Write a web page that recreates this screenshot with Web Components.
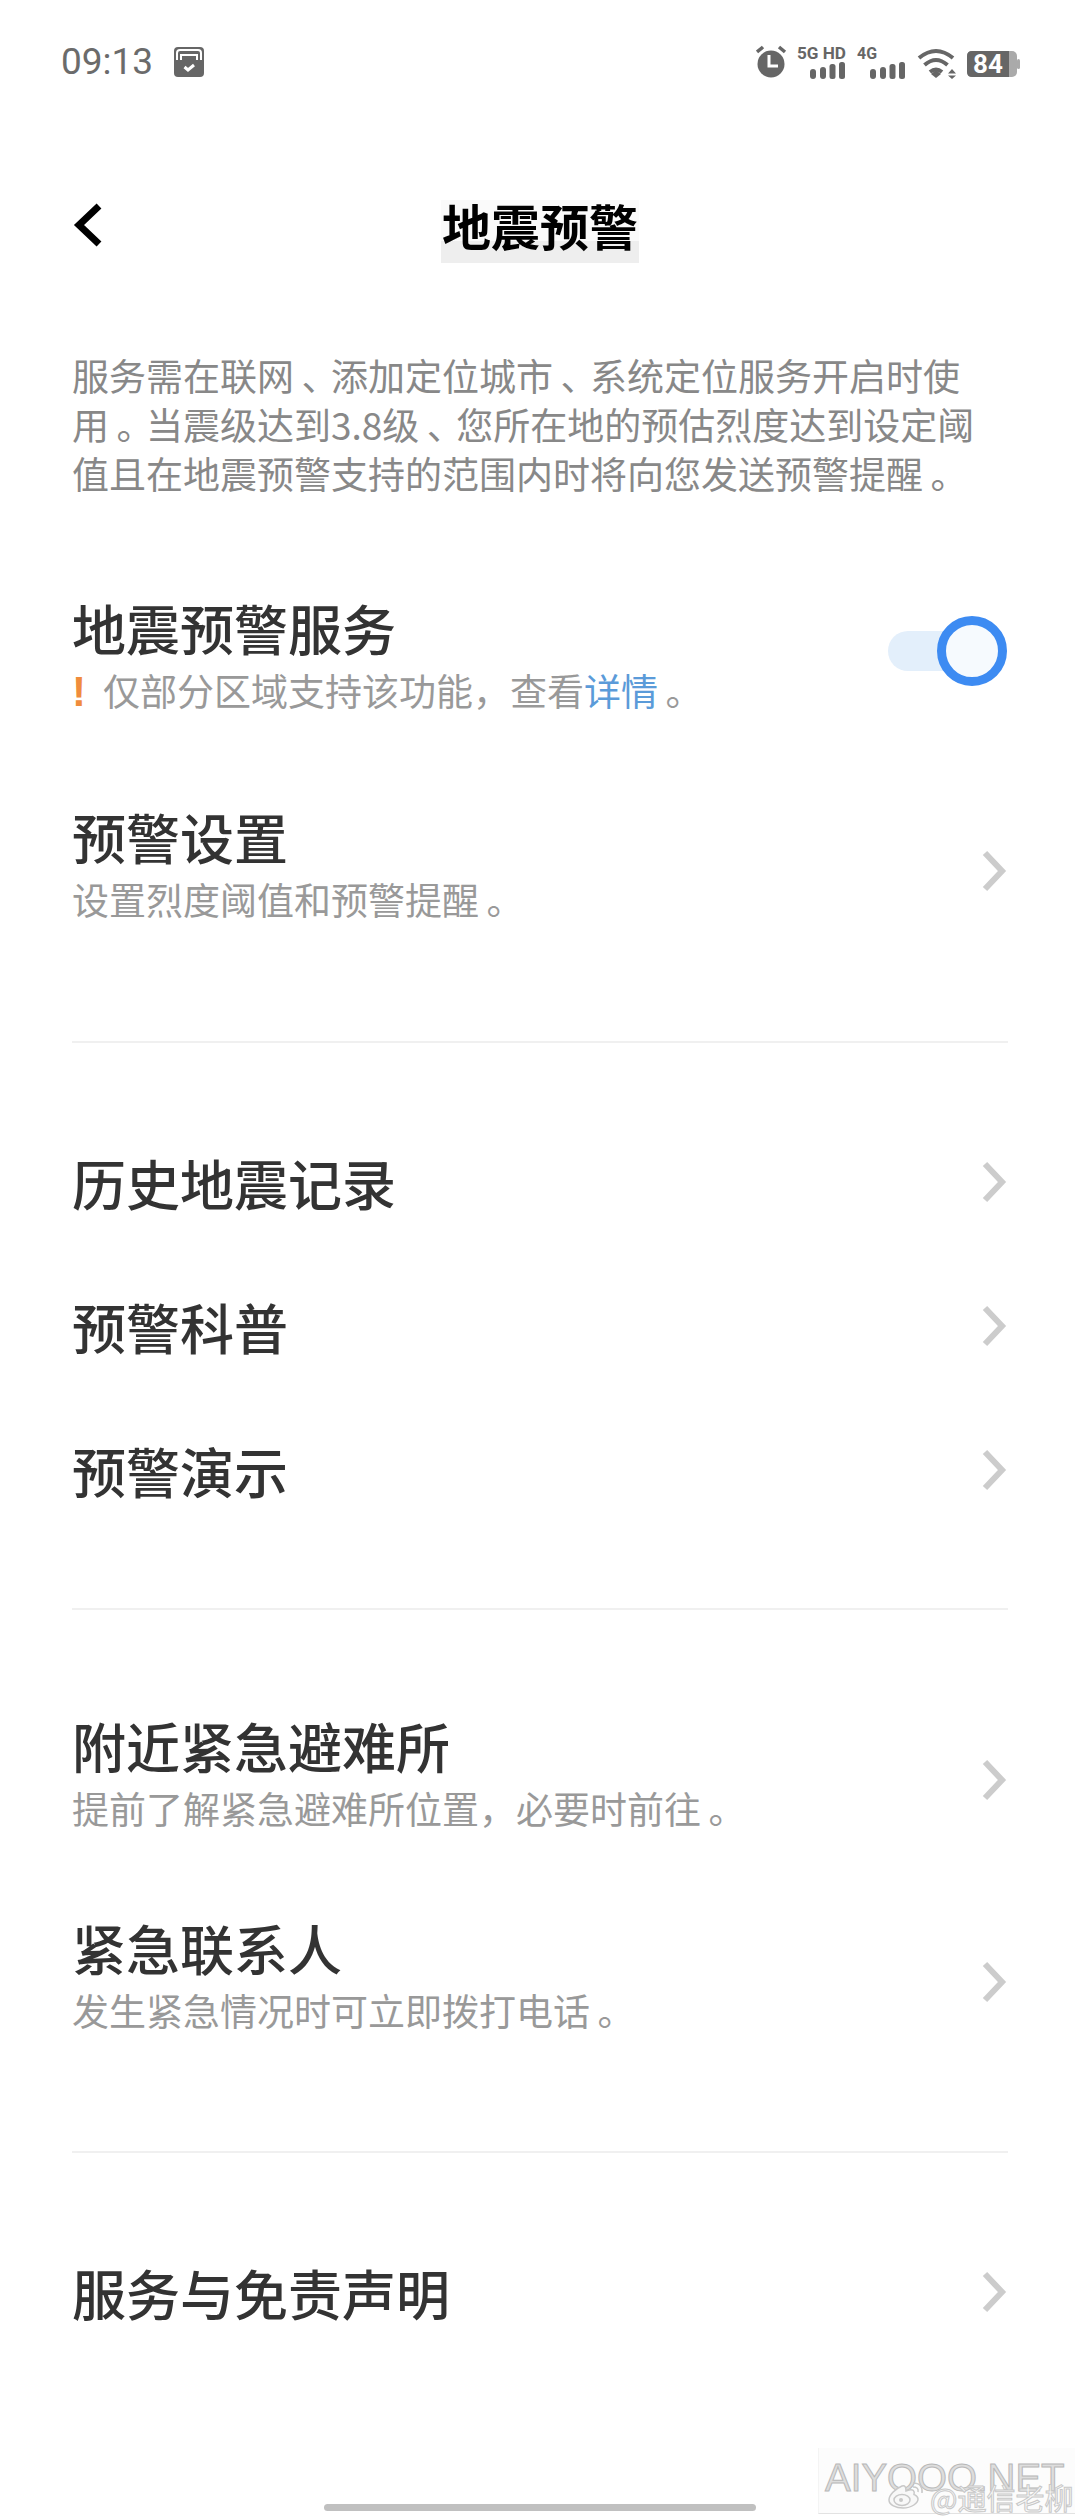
<!DOCTYPE html>
<html lang="zh">
<head>
<meta charset="utf-8">
<style>
    html, body { margin: 0; background: #fff; }
    body {
        width: 1080px;
        height: 2520px;
        overflow: hidden;
        position: relative;
        font-family: "Noto Sans CJK SC", "Noto Sans", sans-serif;
    }
    /* the reference font sets these two marks nearer the middle of their box */
    .p { margin-left: .2em; letter-spacing: -.2em; }
    .warn { display: inline-block; width: 31px; font: 700 42px/0 "Liberation Sans", sans-serif; color: #f08c3c; }
    .link { color: #5b9bd9; }
</style>
</head>
<body>

<template id="status-bar-template">
    <style>
        :host { display: flex; align-items: center; height: 60px; padding: 32px 59px 28px 61px; }
        .time { font: 400 37px/60px Roboto, sans-serif; color: #6b6b6b; }
        .app { margin-left: 21px; }
        .icons { margin-left: auto; }
        svg { display: block; }
    </style>
    <span class="time">09:13</span>
    <svg class="app" width="30" height="30" viewBox="0 0 30 30">
        <rect width="30" height="30" rx="4" fill="#666"/>
        <path d="M3 13V6Q3 3 6 3H24Q27 3 27 6V13" fill="none" stroke="#fff" stroke-width="2"/>
        <path d="M7 13V8H23V13" fill="none" stroke="#fff" stroke-width="2"/>
        <path d="M10.500 20L14 23L20 18" fill="none" stroke="#fff" stroke-width="3"/>
    </svg>
    <svg class="icons" width="265" height="44" viewBox="0 0 265 44">
        <circle cx="15" cy="24" r="13.500" fill="#666"/>
        <path d="M1 12L7 7M29 12L23 7" stroke="#666" stroke-width="3.500"/>
        <path d="M13 15V26H22" fill="none" stroke="#fff" stroke-width="3"/>
        <text x="41" y="19" font-family="Roboto, sans-serif" font-weight="700" font-size="17" fill="#666" textLength="49" lengthAdjust="spacingAndGlyphs">5G HD</text>
        <text x="101" y="19" font-family="Roboto, sans-serif" font-weight="700" font-size="17" fill="#666" textLength="20" lengthAdjust="spacingAndGlyphs">4G</text>
        <g fill="#666">
            <rect x="54" y="29" width="6" height="10" rx="3"/><rect x="64" y="27" width="6" height="12" rx="3"/><rect x="73.500" y="24" width="6" height="15" rx="2.500"/><rect x="83" y="22" width="6" height="17" rx="2.500"/>
            <rect x="114" y="29" width="6" height="10" rx="3"/><rect x="124" y="27" width="6" height="12" rx="3"/><rect x="133.500" y="24" width="6" height="15" rx="2.500"/><rect x="143" y="22" width="6" height="17" rx="2.500"/>
        </g>
        <path d="M163 18Q180 4 197 18M168.500 25Q180 15 191.500 25M174 32Q180 27 186 32" fill="none" stroke="#666" stroke-width="4"/>
        <path d="M175 34L180 30L185 34L180 38Z" fill="#666"/>
        <path d="M192 33.500L196 29L200 33.500ZM192 35.500H200L196 39Z" fill="#666"/>
        <rect x="211" y="11" width="50" height="26" rx="5" fill="#aaa"/>
        <path d="M216 11H253V37H216Q211 37 211 32V16Q211 11 216 11Z" fill="#666"/>
        <rect x="261" y="19" width="3" height="10" rx="1.500" fill="#aaa"/>
        <text x="232" y="33" text-anchor="middle" font-family="Roboto, sans-serif" font-weight="700" font-size="26" fill="#fff">84</text>
    </svg>
</template>

<template id="nav-bar-template">
    <style>
        :host { display: grid; grid-template-columns: 1fr auto 1fr; margin-top: 80px; padding: 0 72px; }
        svg { display: block; margin-top: 1px; }
        h1 {
            margin: 0;
            padding: 0 1px 13px;
            font-size: 49px;
            line-height: 50px;
            font-weight: 700;
            color: #000;
            background: linear-gradient(#fafafa 41px, #eee 41px);
        }
    </style>
    <svg width="32" height="48" viewBox="0 0 32 48"><path d="M27 5L7 24L27 43" fill="none" stroke="#000" stroke-width="7"/></svg>
    <h1><slot></slot></h1>
</template>

<template id="list-row-template">
    <style>
        :host { display: flex; align-items: center; padding: 0 72px; }
        .text { flex: 1; min-width: 0; }
        .title { font-size: 54px; line-height: 62px; font-weight: 500; color: #333; }
        .sub { font-size: 37px; line-height: 62px; color: #999; }
        :host([plain]) .sub { display: none; }
        svg { display: block; margin-top: 5px; }
        :host([plain]) svg { margin-top: -2px; }
    </style>
    <div class="text">
        <div class="title"></div>
        <div class="sub"><slot></slot></div>
    </div>
    <slot name="end"><svg width="28" height="44" viewBox="0 0 28 44"><path d="M5 4L22 22L5 40" fill="none" stroke="#ccc" stroke-width="6"/></svg></slot>
</template>

<template id="switch-template">
    <style>
        :host { display: block; position: relative; width: 119px; height: 70px; margin: 0 1px 16px 0; }
        .track { position: absolute; left: 0; top: 15px; width: 100px; height: 40px; border-radius: 20px; background: #e3effb; }
        .thumb { position: absolute; right: 0; top: 0; width: 70px; height: 70px; box-sizing: border-box; border: 9px solid #3d8bf2; border-radius: 50%; background: #f6fafe; }
    </style>
    <div class="track"></div><div class="thumb"></div>
</template>

<template id="watermark-template">
    <style>
        :host {
            display: block;
            position: absolute;
            left: 818px;
            top: 2448px;
            width: 257px;
            height: 66px;
            box-sizing: border-box;
            background: #fcfcfc;
            border-left: 1px solid #f4f4f4;
            border-bottom: 1px solid #e2e2e2;
        }
        span { position: absolute; white-space: nowrap; }
        .site { left: 6px; top: 8px; font: 400 38.500px/44px "Liberation Sans", sans-serif; color: #ddd; -webkit-text-stroke: 1px #b8b8b8; }
        .user { left: 111px; top: 30px; font: 400 29px/38px "Noto Sans CJK SC", sans-serif; color: #f8f8f8; -webkit-text-stroke: 1px #c8c8c8; }
        svg { position: absolute; left: 68px; top: 33px; }
    </style>
    <span class="site">AIYOOO.NET</span>
    <svg width="38" height="28" viewBox="0 0 38 28">
        <path d="M15 5C8 8 2 14 2 19C2 24 9 27 16 27C25 27 31 22 31 18C31 15 28 14 27 13.500C28 10 26 8 22 9L19 10C19 6 18 4 15 5Z" fill="#f8f8f8" stroke="#c8c8c8" stroke-width="1.500"/>
        <ellipse cx="15" cy="19" rx="8" ry="5.500" fill="none" stroke="#c8c8c8" stroke-width="1.500"/>
        <circle cx="14" cy="19" r="2" fill="#c8c8c8"/>
        <path d="M26 2Q36 2 35 12M26 6Q32 6 31 11" fill="none" stroke="#c8c8c8" stroke-width="1.500"/>
    </svg>
    <span class="user">@通信老柳</span>
</template>

<script>
    // Every element clones its template into an open shadow root
    function shadowFrom(el, id) {
        el.attachShadow({mode: 'open'});
        el.shadowRoot.appendChild(document.getElementById(id).content.cloneNode(true));
    }

    function shadowHtml(el, html) {
        el.attachShadow({mode: 'open'});
        el.shadowRoot.innerHTML = html;
    }

    class EwStatusBar extends HTMLElement {
        constructor() { super(); shadowFrom(this, 'status-bar-template'); }
    }
    class EwNavBar extends HTMLElement {
        constructor() { super(); shadowFrom(this, 'nav-bar-template'); }
    }
    class EwListRow extends HTMLElement {
        constructor() { super(); shadowFrom(this, 'list-row-template'); }
        connectedCallback() {
            this.shadowRoot.querySelector('.title').textContent = this.getAttribute('label');
        }
    }
    class EwSwitch extends HTMLElement {
        constructor() { super(); shadowFrom(this, 'switch-template'); }
    }
    class EwWatermark extends HTMLElement {
        constructor() { super(); shadowFrom(this, 'watermark-template'); }
    }
    class EwSection extends HTMLElement {
        constructor() {
            super();
            shadowHtml(this, `<style>
                :host { display: flex; flex-direction: column; padding: var(--top, 0) 0 var(--bottom, 0); gap: var(--gap, 0); }
            </style><slot></slot>`);
        }
    }
    class EwDivider extends HTMLElement {
        constructor() {
            super();
            shadowHtml(this, `<style>:host { display: block; height: 2px; margin: 0 72px; background: #f0f0f0; }</style>`);
        }
    }
    class EwIntro extends HTMLElement {
        constructor() {
            super();
            shadowHtml(this, `<style>:host { display: block; padding: 0 72px; margin-top: 88px; font-size: 37px; line-height: 49px; color: #888; }</style><slot></slot>`);
        }
    }
    class EwHomeBar extends HTMLElement {
        constructor() {
            super();
            shadowHtml(this, `<style>:host { display: block; position: absolute; left: 324px; top: 2504px; width: 432px; height: 7px; border-radius: 4px; background: #c0c0c0; }</style>`);
        }
    }

    customElements.define('ew-status-bar', EwStatusBar);
    customElements.define('ew-nav-bar', EwNavBar);
    customElements.define('ew-list-row', EwListRow);
    customElements.define('ew-switch', EwSwitch);
    customElements.define('ew-watermark', EwWatermark);
    customElements.define('ew-section', EwSection);
    customElements.define('ew-divider', EwDivider);
    customElements.define('ew-intro', EwIntro);
    customElements.define('ew-home-bar', EwHomeBar);
</script>

<ew-status-bar></ew-status-bar>
<ew-nav-bar>地震预警</ew-nav-bar>
<ew-intro>服务需在联网<span class="p">、</span>添加定位城市<span class="p">、</span>系统定位服务开启时使<br>用<span class="p">。</span>当震级达到3.8级<span class="p">、</span>您所在地的预估烈度达到设定阈<br>值且在地震预警支持的范围内时将向您发送预警提醒<span class="p">。</span></ew-intro>

<ew-section style="--top:99px; --bottom:111px; --gap:85px">
    <ew-list-row label="地震预警服务"><span class="warn">!</span>仅部分区域支持该功能，查看<span class="link">详情</span><span class="p">。</span><ew-switch slot="end"></ew-switch></ew-list-row>
    <ew-list-row label="预警设置">设置烈度阈值和预警提醒<span class="p">。</span></ew-list-row>
</ew-section>
<ew-divider></ew-divider>
<ew-section style="--top:109px; --bottom:106px; --gap:82px">
    <ew-list-row plain label="历史地震记录"></ew-list-row>
    <ew-list-row plain label="预警科普"></ew-list-row>
    <ew-list-row plain label="预警演示"></ew-list-row>
</ew-section>
<ew-divider></ew-divider>
<ew-section style="--top:105px; --bottom:110px; --gap:78px">
    <ew-list-row label="附近紧急避难所">提前了解紧急避难所位置，必要时前往<span class="p">。</span></ew-list-row>
    <ew-list-row label="紧急联系人">发生紧急情况时可立即拨打电话<span class="p">。</span></ew-list-row>
</ew-section>
<ew-divider></ew-divider>
<ew-section style="--top:109px">
    <ew-list-row plain label="服务与免责声明"></ew-list-row>
</ew-section>

<ew-watermark></ew-watermark>
<ew-home-bar></ew-home-bar>
</body>
</html>
